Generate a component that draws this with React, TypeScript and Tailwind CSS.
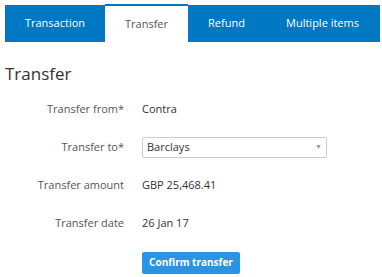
import React from "react";

const tabs = [
  { label: "Transaction", w: "w-[100px]" },
  { label: "Transfer", w: "w-[83px]", active: true },
  { label: "Refund", w: "w-[77px]" },
  { label: "Multiple items", w: "w-[115px]" },
];

function Row({ label, children }: { label: string; children: React.ReactNode }) {
  return (
    <div className="flex items-center h-[38px]">
      <div className="w-[124px] text-right text-[11px] text-[#555]">{label}</div>
      <div className="ml-[18px] text-[11px] text-[#333] flex-1">{children}</div>
    </div>
  );
}

export default function App() {
  return (
    <div className="w-[382px] h-[277px] bg-white" style={{ fontFamily: '"Open Sans", sans-serif' }}>
      <div className="pt-[4px] pl-[5px] flex">
        <div className="flex h-[37px] bg-[#0079c2] mt-[1px] w-[375px] items-stretch">
          {tabs.map((t) =>
            t.active ? (
              <div
                key={t.label}
                className={`${t.w} -mt-[1px] bg-white border-t-2 border-[#0079c2] flex items-center justify-center text-[11px] text-[#555]`}
              >
                {t.label}
              </div>
            ) : (
              <div key={t.label} className={`${t.w} flex items-center justify-center text-[11px] text-white`}>
                {t.label}
              </div>
            )
          )}
        </div>
      </div>
      <h1 className="mt-[20px] ml-[5px] text-[17px] leading-[23px] text-[#333]">Transfer</h1>
      <div className="mt-[5px]">
        <Row label="Transfer from*">Contra</Row>
        <Row label="Transfer to*">
          <div className="w-[185px] h-[21px] border border-[#ccc] rounded-[2px] flex items-center justify-between pl-[4px] pr-[4px]">
            <span>Barclays</span>
            <span className="text-[7px] text-[#999]">▼</span>
          </div>
        </Row>
        <Row label="Transfer amount">GBP 25,468.41</Row>
        <Row label="Transfer date">26 Jan 17</Row>
        <div className="ml-[142px] mt-[6px]">
          <button className="w-[98px] h-[22px] bg-[#2a94e4] rounded-[2px] text-white text-[10px] font-bold">
            Confirm transfer
          </button>
        </div>
      </div>
    </div>
  );
}
